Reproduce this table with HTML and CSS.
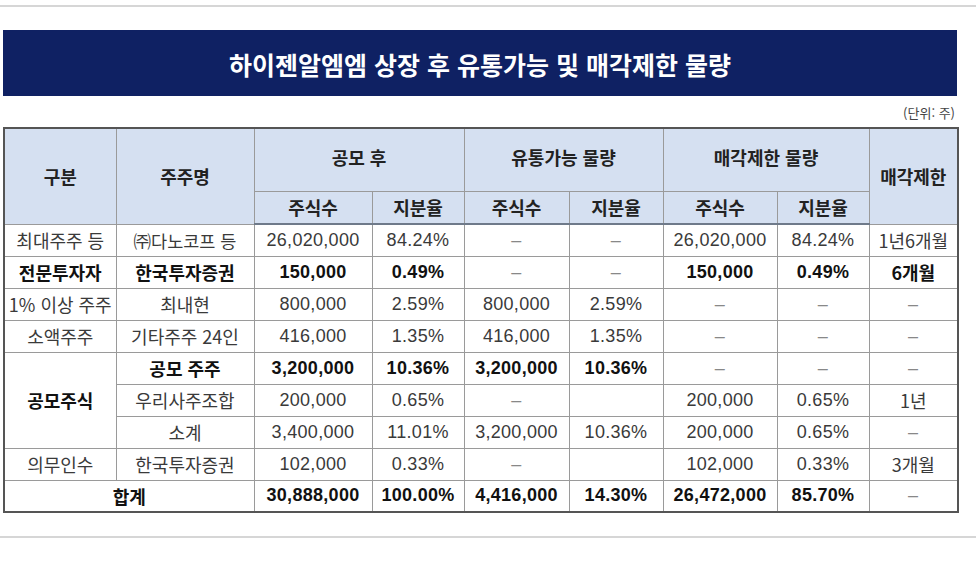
FILE: index.html
```html
<!DOCTYPE html>
<html lang="ko">
<head>
<meta charset="utf-8">
<title>하이젠알엠엠 상장 후 유통가능 및 매각제한 물량</title>
<link rel="stylesheet" href="styles.css">
</head>
<body>
<div class="rule rule-top"></div>
<div class="wrap">
  <div class="title">하이젠알엠엠 상장 후 유통가능 및 매각제한 물량</div>
  <div class="unit">(단위: 주)</div>
  <table class="grid">
    <colgroup>
      <col class="c1"><col class="c2"><col class="c3"><col class="c4"><col class="c5"><col class="c6"><col class="c7"><col class="c8"><col class="c9">
    </colgroup>
    <thead>
      <tr class="h1">
        <th rowspan="2">구분</th>
        <th rowspan="2">주주명</th>
        <th colspan="2">공모 후</th>
        <th colspan="2">유통가능 물량</th>
        <th colspan="2">매각제한 물량</th>
        <th rowspan="2">매각제한</th>
      </tr>
      <tr class="h2">
        <th>주식수</th><th>지분율</th>
        <th>주식수</th><th>지분율</th>
        <th>주식수</th><th>지분율</th>
      </tr>
    </thead>
    <tbody>
      <tr>
        <td class="ko">최대주주 등</td><td class="ko sm">㈜다노코프 등</td><td>26,020,000</td><td>84.24%</td><td class="dash">–</td><td class="dash">–</td><td>26,020,000</td><td>84.24%</td><td class="ko">1년6개월</td>
      </tr>
      <tr class="b">
        <td class="ko">전문투자자</td><td class="ko">한국투자증권</td><td>150,000</td><td>0.49%</td><td class="dash">–</td><td class="dash">–</td><td>150,000</td><td>0.49%</td><td class="ko">6개월</td>
      </tr>
      <tr>
        <td class="ko">1% 이상 주주</td><td class="ko">최내현</td><td>800,000</td><td>2.59%</td><td>800,000</td><td>2.59%</td><td class="dash">–</td><td class="dash">–</td><td class="dash">–</td>
      </tr>
      <tr>
        <td class="ko">소액주주</td><td class="ko">기타주주 24인</td><td>416,000</td><td>1.35%</td><td>416,000</td><td>1.35%</td><td class="dash">–</td><td class="dash">–</td><td class="dash">–</td>
      </tr>
      <tr class="b">
        <td rowspan="3" class="ko grp">공모주식</td><td class="ko">공모 주주</td><td>3,200,000</td><td>10.36%</td><td>3,200,000</td><td>10.36%</td><td class="dash">–</td><td class="dash">–</td><td class="dash">–</td>
      </tr>
      <tr>
        <td class="ko">우리사주조합</td><td>200,000</td><td>0.65%</td><td class="dash">–</td><td></td><td>200,000</td><td>0.65%</td><td class="ko">1년</td>
      </tr>
      <tr>
        <td class="ko">소계</td><td>3,400,000</td><td>11.01%</td><td>3,200,000</td><td>10.36%</td><td>200,000</td><td>0.65%</td><td class="dash">–</td>
      </tr>
      <tr>
        <td class="ko">의무인수</td><td class="ko">한국투자증권</td><td>102,000</td><td>0.33%</td><td class="dash">–</td><td></td><td>102,000</td><td>0.33%</td><td class="ko">3개월</td>
      </tr>
      <tr class="b total">
        <td colspan="2" class="ko">합계</td><td>30,888,000</td><td>100.00%</td><td>4,416,000</td><td>14.30%</td><td>26,472,000</td><td>85.70%</td><td class="dash">–</td>
      </tr>
    </tbody>
  </table>
</div>
<div class="rule rule-bottom"></div>
</body>
</html>
```

FILE: styles.css
```css
* { box-sizing: border-box; }

html, body {
  margin: 0;
  padding: 0;
  background: #ffffff;
}

body {
  width: 976px;
  height: 568px;
  overflow: hidden;
  font-family: "Noto Sans CJK KR", "Noto Sans", sans-serif;
  color: #333;
}

.rule {
  height: 2px;
  background: #d6d6d6;
}

.rule-top { margin-top: 5px; }
.rule-bottom { margin-top: 23px; }

.wrap {
  width: 954px;
  margin: 23px 0 0 3px;
}

.title {
  height: 66px;
  background: #0f2163;
  color: #ffffff;
  display: flex;
  align-items: center;
  justify-content: center;
  font-size: 25px;
  font-weight: 700;
  letter-spacing: 0;
  padding-top: 1px;
}

.unit {
  height: 31px;
  text-align: right;
  font-size: 13px;
  line-height: 16px;
  padding: 9px 2px 0 0;
  color: #444;
}

.grid {
  width: 954px;
  border-collapse: collapse;
  table-layout: fixed;
  border: 2px solid #555;
}

.c1 { width: 112px; }
.c2 { width: 138px; }
.c3 { width: 118px; }
.c4 { width: 92px; }
.c5 { width: 105px; }
.c6 { width: 94px; }
.c7 { width: 114px; }
.c8 { width: 92px; }
.c9 { width: 89px; }

.grid th,
.grid td {
  border: 1px solid #9a9a9a;
  text-align: center;
  vertical-align: middle;
  padding: 0;
  white-space: nowrap;
  overflow: hidden;
}

.grid th {
  background: #d5e0f1;
  color: #222;
  font-size: 18px;
  font-weight: 700;
}

.grid thead tr.h1 { height: 63px; }
.grid thead tr.h2 { height: 33px; }
.grid thead tr.h1 th[colspan] { vertical-align: top; padding-top: 15px; }
.grid thead tr.h2 th { border-bottom: 2px solid #6f7a8a; }

.grid td {
  height: 32px;
  font-size: 18px;
  font-family: "Liberation Sans", "Noto Sans CJK KR", sans-serif;
  color: #3a3a3a;
  letter-spacing: 0.3px;
}

.grid td.ko {
  font-family: "Noto Sans CJK KR", sans-serif;
  font-size: 18px;
  letter-spacing: 0;
}

.grid td.sm {
  font-size: 17.5px;
}

.grid tr.b td {
  font-weight: 700;
  color: #111;
}

.grid td.grp {
  font-weight: 700;
  color: #222;
}

.grid td.dash,
.grid tr.b td.dash {
  color: #888;
  font-weight: 400;
}

.grid tr.total td {
  border-top: 1px solid #777;
}
```
